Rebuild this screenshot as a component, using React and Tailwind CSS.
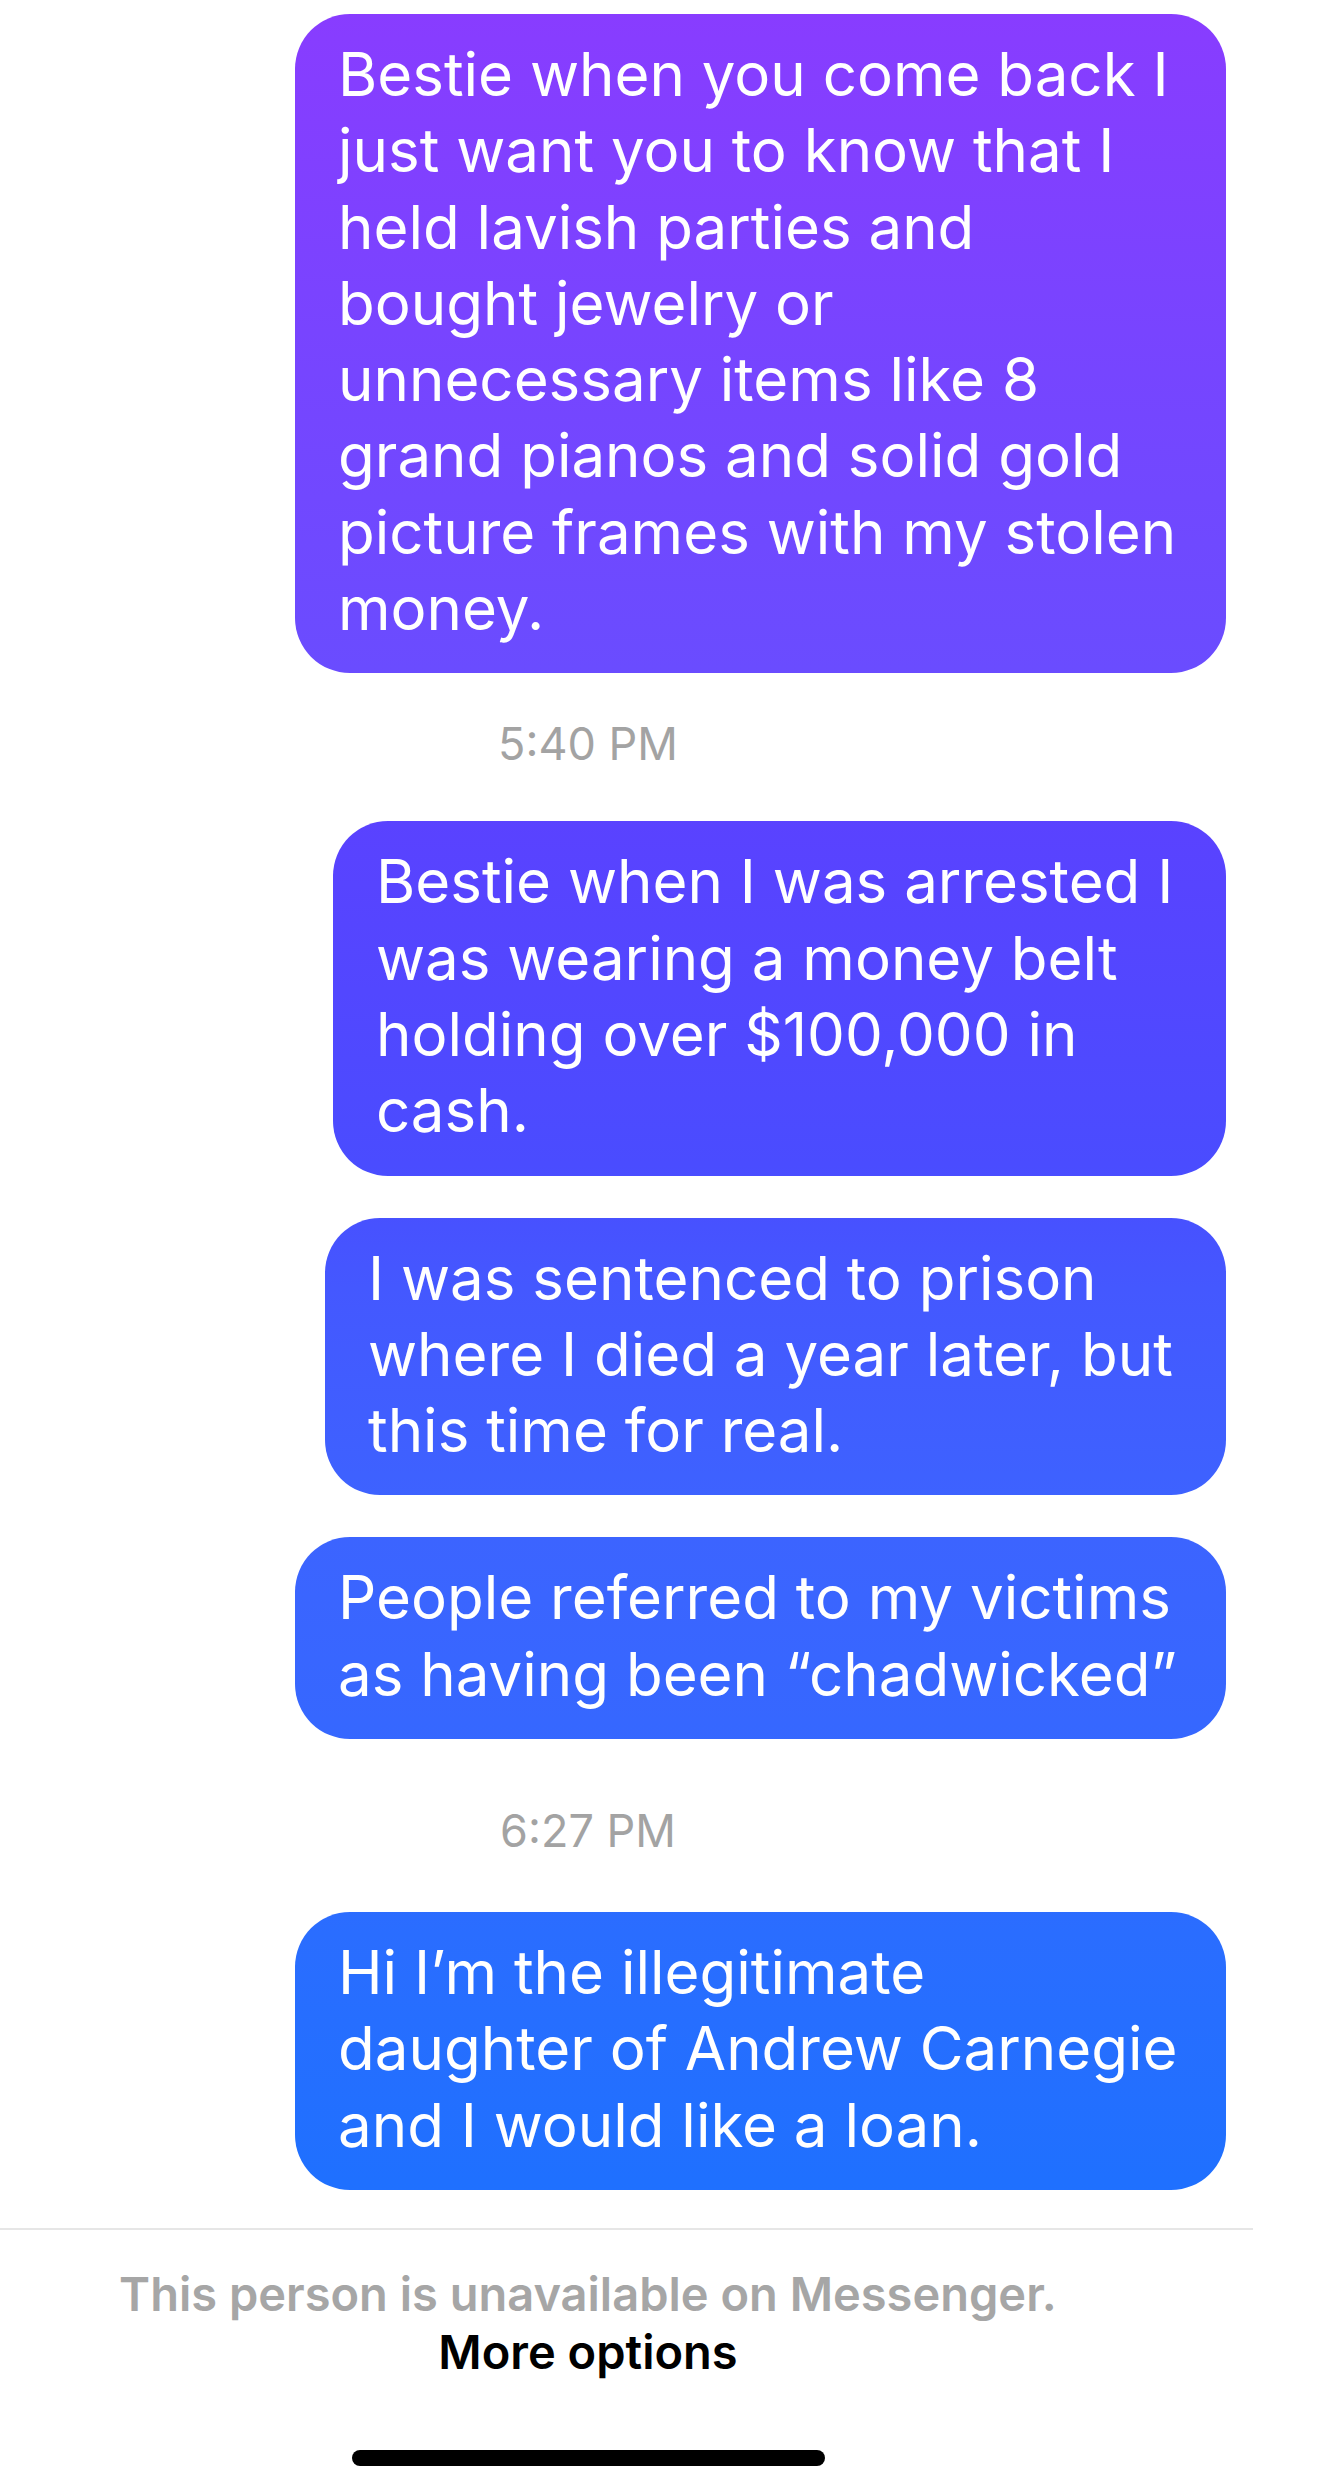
import React from "react";

const messages = [
  {
    width: "w-[931px]",
    lines: [
      "Bestie when you come back I",
      "just want you to know that I",
      "held lavish parties and",
      "bought jewelry or",
      "unnecessary items like 8",
      "grand pianos and solid gold",
      "picture frames with my stolen",
      "money.",
    ],
  },
  { time: "5:40 PM", pad: "pt-[5px] pb-[53px]" },
  {
    width: "w-[893px]",
    lines: [
      "Bestie when I was arrested I",
      "was wearing a money belt",
      "holding over $100,000 in",
      "cash.",
    ],
  },
  {
    width: "w-[901px]",
    lines: [
      "I was sentenced to prison",
      "where I died a year later, but",
      "this time for real.",
    ],
  },
  {
    width: "w-[931px]",
    lines: ["People referred to my victims", "as having been \u201cchadwicked\u201d"],
  },
  { time: "6:27 PM", pad: "pt-[26px] pb-[57px]" },
  {
    width: "w-[931px]",
    lines: [
      "Hi I\u2019m the illegitimate",
      "daughter of Andrew Carnegie",
      "and I would like a loan.",
    ],
  },
];

//! Sent bubble, gradient is pinned to the screen like Messenger
function Bubble({ width, lines }) {
  return (
    <div
      className={`${width} self-end rounded-[55px] bg-fixed bg-[linear-gradient(180deg,#893cff_0%,#7645ff_15%,#6a4cff_27%,#5a42ff_33%,#4a4cff_47%,#4458ff_52%,#3c64ff_62%,#3468ff_72%,#2a6dff_78%,#1f70ff_88%,#1a73ff_100%)] pl-[43px] pr-[20px] pt-[22px] pb-[27px] text-[60px] leading-[76.3px] text-white`}
    >
      {lines.map((line) => (
        <div key={line} className="whitespace-nowrap">
          {line}
        </div>
      ))}
    </div>
  );
}

function Timestamp({ time, pad }) {
  return (
    <div
      className={`w-[1176px] text-center text-[45px] leading-[48px] text-[#a3a3a3] ${pad}`}
    >
      {time}
    </div>
  );
}

export default function App() {
  return (
    <div
      className="w-[1335px] h-[2478px] bg-white flex flex-col overflow-hidden"
      style={{ fontFamily: "Inter, 'Noto Sans', sans-serif" }}
    >
      <div className="flex flex-col pt-[14px] pr-[109px]">
        {messages.map((m, i) =>
          m.time ? (
            <Timestamp key={i} time={m.time} pad={m.pad} />
          ) : (
            <div key={i} className="flex flex-col mb-[42px] last:mb-0">
              <Bubble width={m.width} lines={m.lines} />
            </div>
          )
        )}
      </div>

      <div className="mt-[38px] w-[1253px] h-[2px] bg-[#e6e6e6]" />

      <div className="w-[1176px] flex flex-col items-center pt-[36px]">
        <p className="text-[47px] leading-[56px] font-semibold text-[#a6a6a6]">
          This person is unavailable on Messenger.
        </p>
        <button className="text-[47px] leading-[60px] font-semibold text-black">
          More options
        </button>
      </div>

      <div className="w-[1176px] flex justify-center mt-auto mb-[12px]">
        <div className="w-[473px] h-[16px] rounded-full bg-black" />
      </div>
    </div>
  );
}
